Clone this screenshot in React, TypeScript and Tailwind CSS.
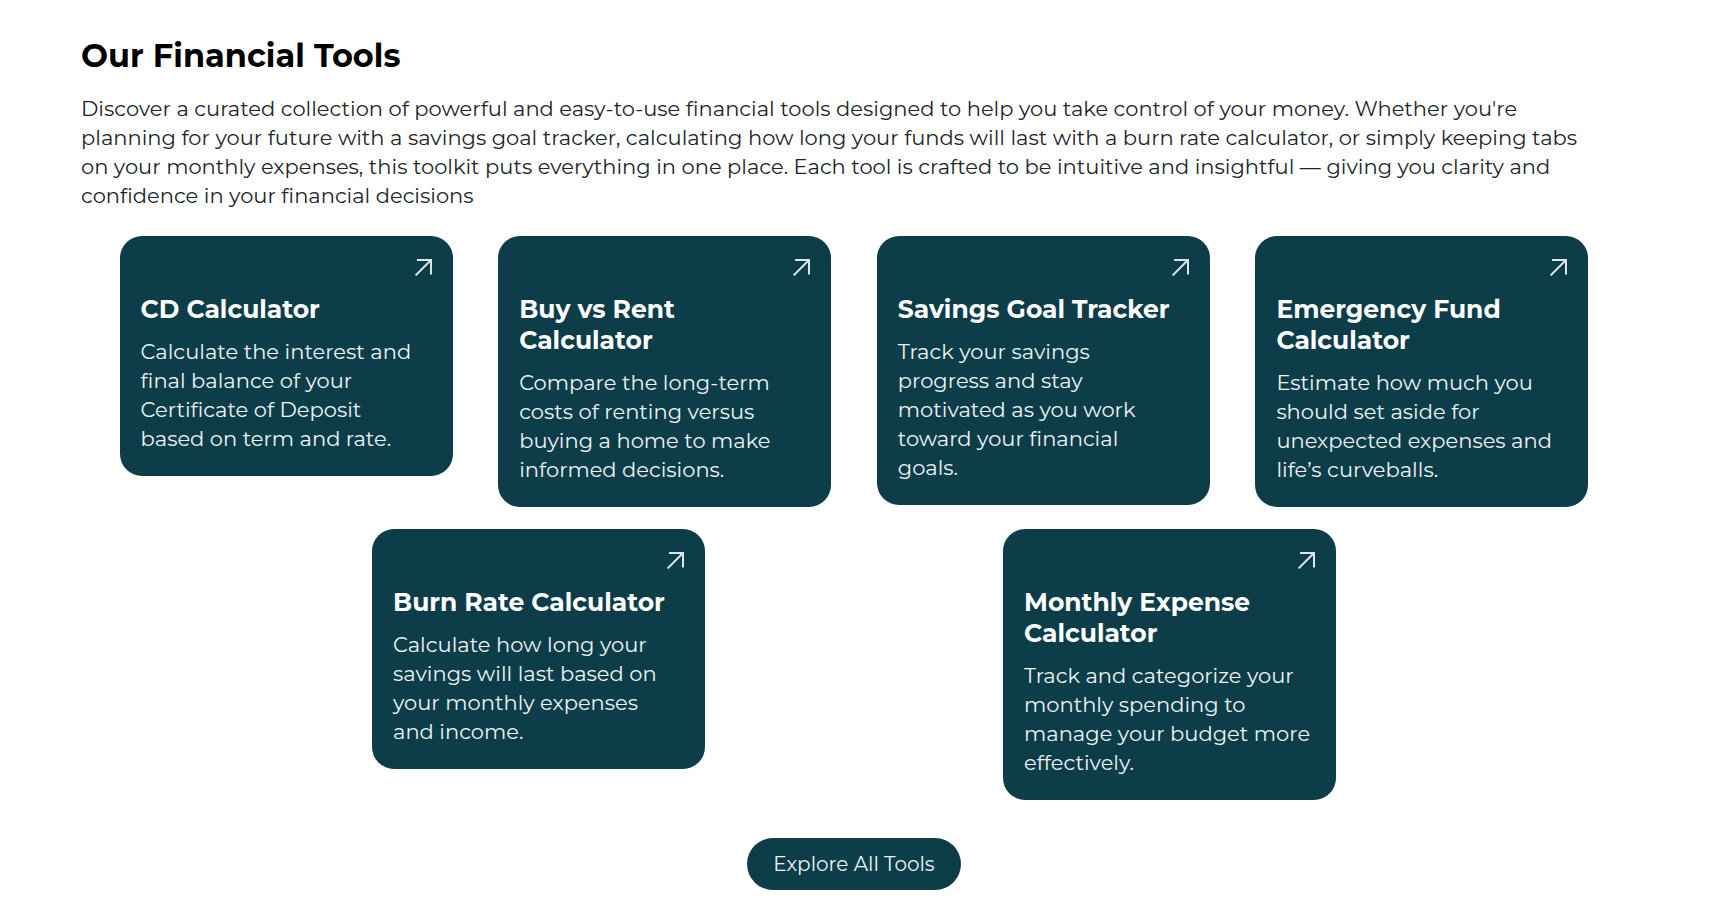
type Tool = { title: string; text: string; href: string };

const tools: Tool[] = [
  {
    title: "CD Calculator",
    text: "Calculate the interest and final balance of your Certificate of Deposit based on term and rate.",
    href: "#cd-calculator",
  },
  {
    title: "Buy vs Rent Calculator",
    text: "Compare the long-term costs of renting versus buying a home to make informed decisions.",
    href: "#buy-vs-rent",
  },
  {
    title: "Savings Goal Tracker",
    text: "Track your savings progress and stay motivated as you work toward your financial\ngoals.",
    href: "#savings-goal",
  },
  {
    title: "Emergency Fund Calculator",
    text: "Estimate how much you should set aside for unexpected expenses and life’s curveballs.",
    href: "#emergency-fund",
  },
  {
    title: "Burn Rate Calculator",
    text: "Calculate how long your savings will last based on your monthly expenses and income.",
    href: "#burn-rate",
  },
  {
    title: "Monthly Expense Calculator",
    text: "Track and categorize your monthly spending to manage your budget more effectively.",
    href: "#monthly-expense",
  },
];

function ArrowIcon() {
  return (
    <svg
      className="size-[18px] self-end text-[#dce5e8]"
      viewBox="0 0 18 18"
      fill="none"
      stroke="currentColor"
      strokeWidth="2"
      aria-hidden="true"
    >
      <path d="M3 2H17V16.5M17 2L1.6 17.4" />
    </svg>
  );
}

function ToolCard({ title, text, href }: Tool) {
  return (
    <a
      href={href}
      className="flex w-[333px] flex-col rounded-[22px] bg-[#0d3d49] px-[21px] pt-[22px] pb-[23px]"
    >
      <ArrowIcon />
      <h3 className="mt-[18px] text-[25px] leading-[31px] font-bold text-white">{title}</h3>
      <p className="mt-3 pr-[3px] text-[21px] leading-[29px] whitespace-pre-line text-[#eef3f4]">
        {text}
      </p>
    </a>
  );
}

export default function App() {
  return (
    <main className="min-h-screen bg-white pt-9 pr-[94px] pb-3 pl-[74px] font-['Montserrat','Inter',sans-serif]">
      <header className="pr-10 pl-[7px]">
        <h2 className="text-[32px] leading-10 font-bold text-black">Our Financial Tools</h2>
        <p className="mt-[18px] text-[21px] leading-[29px] text-[#212529]">
          Discover a curated collection of powerful and easy-to-use financial tools designed to help
          you take control of your money. Whether you're planning for your future with a savings
          goal tracker, calculating how long your funds will last with a burn rate calculator, or
          simply keeping tabs on your monthly expenses, this toolkit puts everything in one place.
          Each tool is crafted to be intuitive and insightful — giving you clarity and confidence in
          your financial decisions
        </p>
      </header>
      <section
        aria-label="Tools"
        className="mt-[26px] flex flex-wrap items-start justify-evenly gap-y-[22px]"
      >
        {tools.map((tool) => (
          <ToolCard key={tool.title} {...tool} />
        ))}
      </section>
      <div className="mt-[38px] flex justify-center">
        <button
          type="button"
          className="h-[52px] rounded-full bg-[#0d3d49] px-[26px] text-[20px] leading-[29px] text-[#eef3f4]"
        >
          Explore All Tools
        </button>
      </div>
    </main>
  );
}
